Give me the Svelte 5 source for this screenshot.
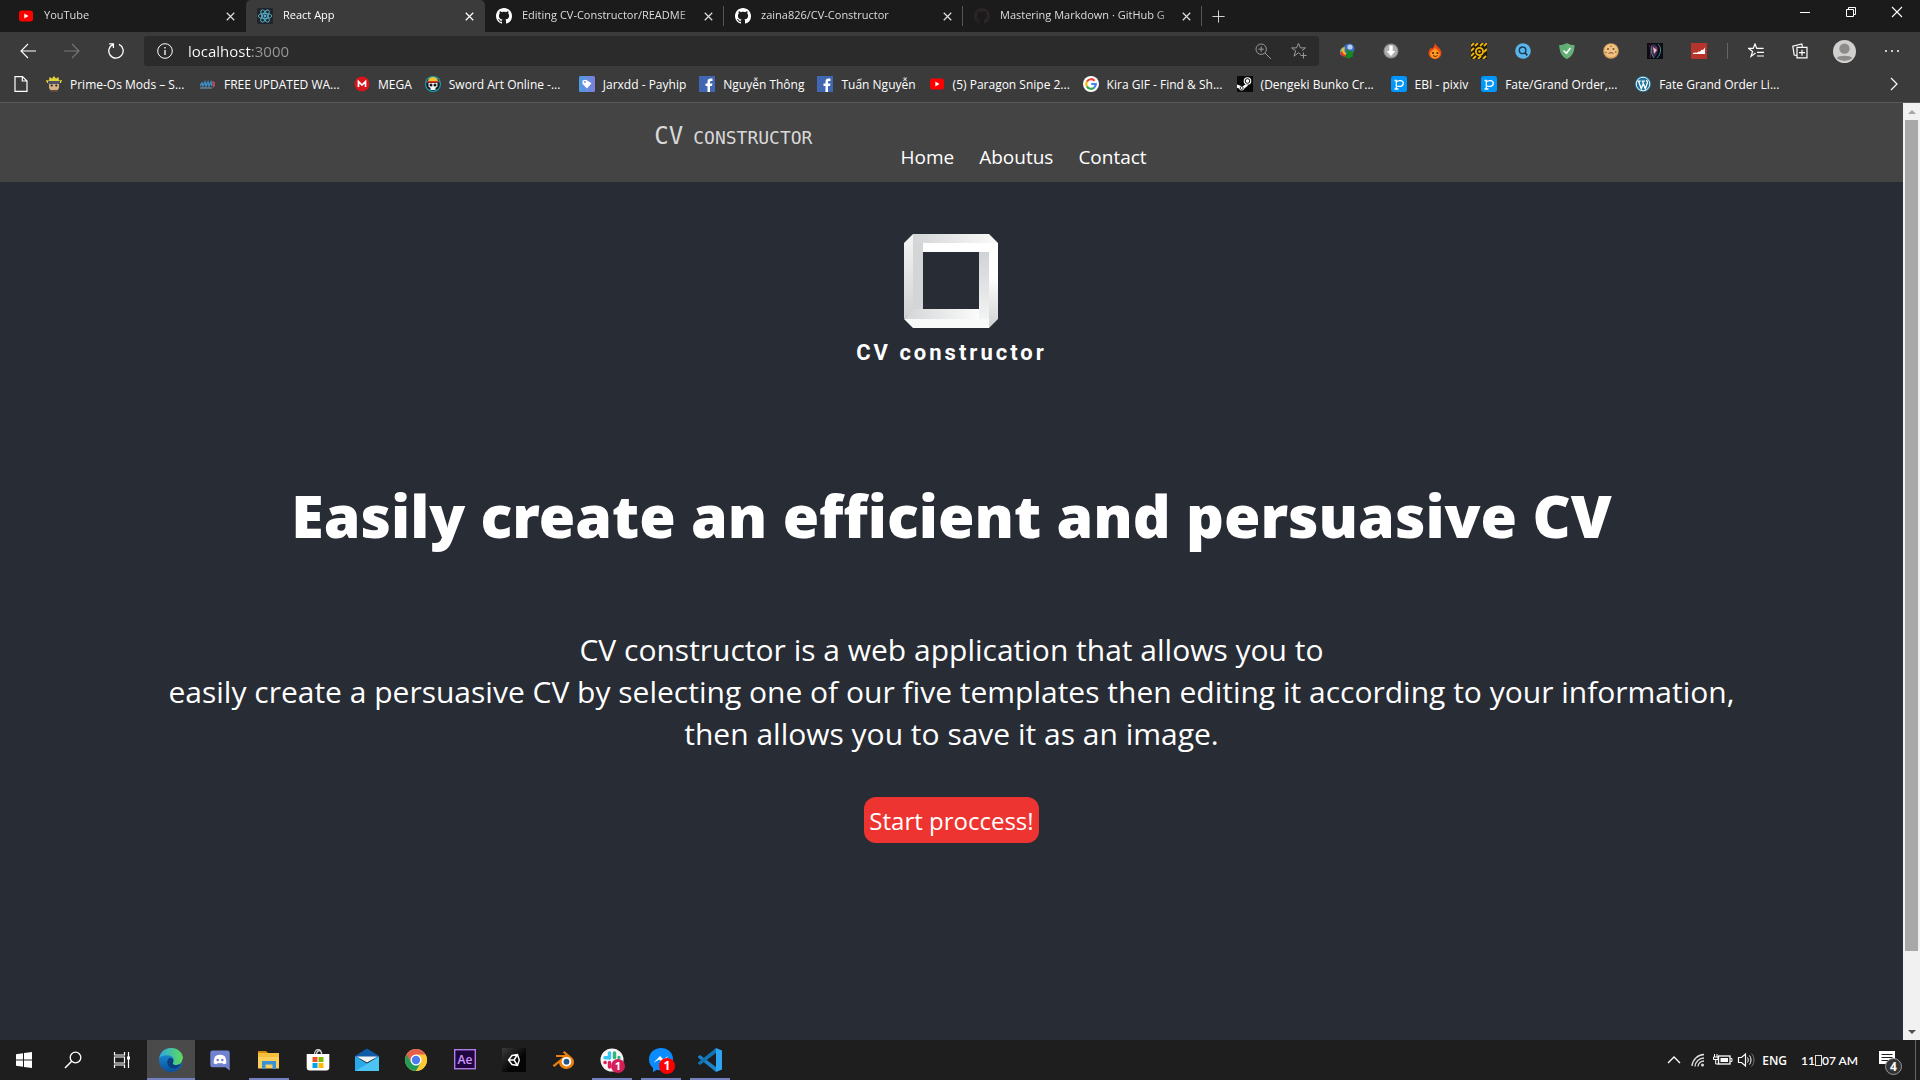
<script>
  const github =
    '<path fill="COLOR" d="M8 0C3.58 0 0 3.58 0 8c0 3.54 2.29 6.53 5.47 7.59.4.07.55-.17.55-.38 0-.19-.01-.82-.01-1.49-2.01.37-2.53-.49-2.69-.94-.09-.23-.48-.94-.82-1.13-.28-.15-.68-.52-.01-.53.63-.01 1.08.58 1.23.82.72 1.21 1.87.87 2.33.66.07-.52.28-.87.51-1.07-1.78-.2-3.64-.89-3.64-3.95 0-.87.31-1.59.82-2.15-.08-.2-.36-1.02.08-2.12 0 0 .67-.21 2.2.82.64-.18 1.32-.27 2-.27s1.36.09 2 .27c1.53-1.04 2.2-.82 2.2-.82.44 1.1.16 1.92.08 2.12.51.56.82 1.27.82 2.15 0 3.07-1.87 3.75-3.65 3.95.29.25.54.73.54 1.48 0 1.07-.01 1.93-.01 2.2 0 .21.15.46.55.38A8.01 8.01 0 0016 8c0-4.42-3.58-8-8-8z"/>';

  // 16-unit icons used in the tab strip, toolbar and bookmarks bar
  const small = {
    youtube: '<rect x="1" y="2.5" width="14" height="11" rx="2.5" fill="#f00"/><path d="M6.3 5.5v5l4.2-2.5z" fill="#fff"/>',
    react: '<rect width="16" height="16" rx="1.5" fill="#20242b"/><g fill="none" stroke="#5ab4cc" stroke-width=".9"><ellipse cx="8" cy="8" rx="6.8" ry="2.6"/><ellipse cx="8" cy="8" rx="6.8" ry="2.6" transform="rotate(60 8 8)"/><ellipse cx="8" cy="8" rx="6.8" ry="2.6" transform="rotate(120 8 8)"/></g><circle cx="8" cy="8" r="1.4" fill="#5ab4cc"/>',
    github: github.replace('COLOR', '#fff'),
    githubDark: github.replace('COLOR', '#2c2425'),
    close: '<path d="M4 4l8 8M12 4l-8 8" stroke="currentColor" stroke-width="1.3" fill="none"/>',
    plus: '<path d="M8 1.5v13M1.5 8h13" stroke="currentColor" fill="none"/>',
    back: '<path d="M16 8H1M8 1L1 8l7 7" stroke="currentColor" stroke-width="1.1" fill="none"/>',
    forward: '<path d="M0 8h15M8 1l7 7-7 7" stroke="currentColor" stroke-width="1.1" fill="none"/>',
    reload: '<path d="M5.2 1.3A7.2 7.2 0 1 0 11 1.4M1.2.8h4.2V5" stroke="currentColor" stroke-width="1.3" fill="none"/>',
    info: '<circle cx="8" cy="8" r="7.3" stroke="currentColor" fill="none"/><path d="M8 7v5M8 4v1.4" stroke="currentColor" stroke-width="1.3"/>',
    zoom: '<circle cx="6.2" cy="6.2" r="5.2" stroke="currentColor" fill="none"/><path d="M10 10l6 6M6.2 3.5v5.4M3.5 6.2h5.4" stroke="currentColor" fill="none"/>',
    star: '<path d="M9.8 11.4L7.5 9.8 3 13.2l1.7-5.3L.6 4.9h4.9L7.5.4l2 4.5h5L11 7.7M12.5 9.5v6M9.5 12.5h6" stroke="currentColor" fill="none"/>',
    favs: '<path d="M7.5 10L3 13.4l1.6-5L.6 5.4h4.6L7 1l1.8 4.4h6.8M9 9.3h7M9 13h7" stroke="currentColor" stroke-width="1.2" fill="none"/>',
    collections: '<path d="M4.5 12.3L2.2 12 .8 3.2 9.8 1l.6 2.6M5 4.4h10v10.4H5zM10 6.7v6M7 9.7h6" stroke="currentColor" stroke-width="1.2" fill="none"/>',
    page: '<path d="M2 .6h7.5L14 5v10.4H2zM9.3.6V5H14" stroke="currentColor" stroke-width="1.2" fill="none"/>',
    chevron: '<path d="M5 2l6 6-6 6" stroke="currentColor" stroke-width="1.2" fill="none"/>',
    dots: '<g fill="currentColor"><circle cx="2" cy="8" r="1"/><circle cx="8" cy="8" r="1"/><circle cx="14" cy="8" r="1"/></g>',
    minimize: '<path d="M3 8.5h10" stroke="currentColor"/>',
    restore: '<path d="M3.5 5.5h7v7h-7zM5.500 5.500v-2h7v7h-2" stroke="currentColor" fill="none"/>',
    shut: '<path d="M3 3l10 10M13 3L3 13" stroke="currentColor" stroke-width="1.1"/>',
    avatar: '<circle cx="8" cy="8" r="8" fill="#d2d0ce"/><circle cx="8" cy="6" r="3.6" fill="#8d8a87"/><path d="M2.600 12.500c1.500-2 9.300-2 10.800 0A7.800 7.800 0 0 1 2.600 12.500z" fill="#8d8a87"/>',
    idm: '<circle cx="10" cy="6" r="5.500" fill="#3a6cc4"/><circle cx="11" cy="4" r="2.600" fill="#b5cdf0"/><path d="M5 4C2 5 .5 8 2 11l4 2.500 1.500-3C5.500 9.500 5 7 6 4.500z" fill="#e8c21c"/><path d="M4 4.500C1 6.500.5 9 1.500 11.500l1.500 1C2 9.500 2.500 7 4.500 5z" fill="#6fb6e0"/><path d="M1 9c.6 3 3 5 6 5.500l1-2C5.500 12.200 3.500 10.500 3 8z" fill="#d8382c"/><path d="M6.500 6.500L15.500 9l-2 1.500.5 3-4.500 2-4-2 3.500-2.500z" fill="#128a1e"/>',
    download: '<circle cx="8" cy="8" r="7.500" fill="#8e8e8e"/><circle cx="8" cy="8" r="6.200" fill="#b0b0b0"/><path d="M6.300 2.500h3.400v5.500h2.600L8 13 3.700 8h2.600z" fill="#fff"/>',
    flame: '<path d="M8 0c.6 3 6.500 5 6.500 10.200A6.200 6.200 0 0 1 8 16a6.200 6.200 0 0 1-6.500-5.800C1.500 7.600 3 6 4 4.500l1 1.600C6.500 4.500 7.700 2.600 8 0z" fill="#ee4a12"/><path d="M8 5c2 2 4.800 3 4.800 6A4.600 4.600 0 0 1 8 15.500 4.600 4.600 0 0 1 3.200 11C3.200 8.500 6 7.500 8 5z" fill="#ff9a1c"/><circle cx="6" cy="10" r="1" fill="#4c1a05"/><circle cx="10.500" cy="10" r="1" fill="#4c1a05"/><path d="M6 12.500c1.500 1.200 3 1.200 4.500 0" stroke="#4c1a05" fill="none"/>',
    reel: '<rect width="16" height="16" fill="#201a08"/><path d="M0 3l3-3M4 3l3-3M9 3l3-3M13 3l3-3M0 8l3-3M13 9l3-3M0 13l3-3M2 16l3-3M7 16l3-3M12 16l3-3" stroke="#f2b70d" stroke-width="1.800"/><circle cx="8.500" cy="8.500" r="3.600" fill="none" stroke="#f2b70d" stroke-width="1.800"/><circle cx="8.500" cy="8.500" r="1.200" fill="#f2b70d"/>',
    search: '<circle cx="8" cy="8" r="7.800" fill="#5ab5ea"/><circle cx="7.600" cy="7.300" r="3.300" fill="none" stroke="#1c3c55" stroke-width="1.400"/><path d="M10 9.700l2.300 2.600" stroke="#1c3c55" stroke-width="1.800"/>',
    shield: '<path d="M8 .2c2.600 1.400 5 1.700 7.500 1.800 0 6-1.500 11-7.500 14C2 13 .5 8 .5 2 3 1.900 5.400 1.600 8 .2z" fill="#67b279"/><path d="M8 .2C5.400 1.600 3 1.900.5 2c0 6 1.500 11 7.500 14z" fill="#5fae72"/><path d="M4.500 7.500L7.400 10.300l4-5.300" stroke="#fff" stroke-width="1.500" fill="none"/>',
    cookie: '<circle cx="8" cy="8" r="7.800" fill="#d9a05b"/><circle cx="8" cy="7.500" r="6.600" fill="#efc183"/><g fill="#7a4b20"><circle cx="5" cy="6" r="1"/><circle cx="10.500" cy="6" r="1"/><circle cx="8" cy="3.200" r=".7"/><circle cx="12.700" cy="9" r=".7"/><circle cx="3" cy="9.500" r=".7"/></g><path d="M5.500 10.500c1.500-1 3.500-1 5 0" stroke="#7a4b20" fill="none"/>',
    portrait: '<rect width="16" height="16" fill="#0b0b14"/><path d="M2 2c2 3 2 8 1 13" stroke="#6b2438" fill="none"/><path d="M4 2c3-2 6 0 7 4 0 4-2 7-4 9-3-3-4-9-3-13z" fill="#3c2a50"/><path d="M6 4l4 3-3 4z" fill="#eabfc8"/><path d="M11 1c4 4 3 10-1 14M5 3c-1 4-1 8 2 12" stroke="#4a8d96" fill="none"/><circle cx="9" cy="5" r="1" fill="#b92c3e"/>',
    graph: '<rect width="16" height="16" fill="#b5352c"/><path d="M2 10l2-.5 2 .3 1.500-1.300 1.500.3 1.500-2 1.500.2L14 4.500V11H2z" fill="#fff"/>',
    naruto: '<path d="M1 7L0 4l3 .5L3.500 1 6 2.500 8 0l2 2.500L12.500 1l.5 3.500 3-.5-1 3z" fill="#e2d33a"/><rect x="2" y="5" width="12" height="3" fill="#4d5361"/><path d="M3 8h10v4l-2 3H5l-2-3z" fill="#d7b184"/><circle cx="5.700" cy="9.500" r="1.100" fill="#222"/><circle cx="10.300" cy="9.500" r="1.100" fill="#222"/><path d="M4 14h8v2H4z" fill="#5e4a39"/>',
    wave: '<path d="M0 10l2-3 1 3 2-4 1 4 2-4 1 4 2-4 1 4" stroke="#3b8ac0" stroke-width="1.600" fill="none"/><path d="M12 5l3 1v4l-2 2z" fill="#b44b54"/><path d="M0 12h12" stroke="#7aa2bd"/>',
    mega: '<circle cx="8" cy="8" r="7.500" fill="#d9141b"/><path d="M4.500 11V5.500L8 9l3.500-3.500V11" stroke="#fff" stroke-width="1.700" fill="none"/>',
    skull: '<circle cx="8" cy="8" r="8" fill="#16a3b8"/><circle cx="8" cy="8" r="6.800" fill="#14161a"/><path d="M3 5.500a5 4.500 0 0 1 10 0z" fill="#f1c232"/><path d="M2 5h12v1.600H2z" fill="#d23a2a"/><path d="M3.500 7h9v3.500l-2 1.500v2h-5v-2l-2-1.500z" fill="#f4f4f4"/><circle cx="6" cy="9" r="1.500" fill="#14161a"/><circle cx="10" cy="9" r="1.500" fill="#14161a"/>',
    payhip: '<defs><linearGradient id="ph" x1="0" x2="1"><stop offset="0" stop-color="#4e9be4"/><stop offset="1" stop-color="#7d7fdc"/></linearGradient></defs><rect width="16" height="16" rx="1.500" fill="url(#ph)"/><path d="M3.500 4.500l3.500-.8 5.500 3.500L8 12.500 3.500 8z" fill="#fff"/><circle cx="6" cy="6" r=".9" fill="#5e8ce0"/>',
    facebook: '<rect width="16" height="16" fill="#4267b2"/><path d="M11 16V10h2l.4-2.400H11V6.200c0-.8.300-1.200 1.300-1.200h1.200V2.800C13 2.700 12.300 2.600 11.600 2.600 9.600 2.600 8.500 3.800 8.500 5.800v1.800h-2V10h2v6z" fill="#fff"/>',
    google: '<circle cx="8" cy="8" r="8" fill="#fff"/><g fill="none" stroke-width="2.200"><path d="M11.600 4.800A4.800 4.800 0 0 0 3.900 5.600" stroke="#ea4335"/><path d="M3.900 5.600a4.900 4.900 0 0 0 0 4.800" stroke="#fbbc05"/><path d="M3.900 10.400a4.800 4.800 0 0 0 7.300 1.200" stroke="#34a853"/><path d="M11.200 11.600A4.800 4.800 0 0 0 12.800 8H8.200" stroke="#4285f4"/></g>',
    steam: '<rect width="16" height="16" fill="#0a0a0a"/><circle cx="10.500" cy="5" r="3.800" fill="#fff"/><circle cx="10.500" cy="5" r="2.300" fill="none" stroke="#0a0a0a"/><path d="M0 8.500l5.500 2L9 8l2 1.500-3.600 3A2.800 2.800 0 0 1 2 12.600l-2-.9z" fill="#fff"/><circle cx="4.700" cy="12" r="1.500" fill="none" stroke="#0a0a0a" stroke-width=".8"/>',
    pixiv: '<rect width="16" height="16" rx="2.500" fill="#0096fa"/><path d="M3.500 4.500H5.300V13M5.500 6c1-1.800 6.800-2.500 6.800 1.300 0 3.700-5 3.500-6.800 2.500M3.500 13h4" stroke="#fff" stroke-width="1.300" fill="none"/>',
    wordpress: '<circle cx="8" cy="8" r="8" fill="#21759b"/><circle cx="8" cy="8" r="6.800" fill="none" stroke="#fff" stroke-width=".9"/><path d="M2.500 5.200h3.200M3.600 5.200l2.700 7.600L8 8M6.700 5.200h3.200M7.500 5.200l2.800 7.600 2.200-6.400c-.2-1-1-1.600-1-2.400" stroke="#fff" stroke-width="1.300" fill="none"/>',
  };

  // 24-unit icons used in the taskbar
  const large = {
    windows: '<path d="M4 6.200l7-1v6.300H4zM12 5.100l8-1.100v7.500h-8zM4 12.500h7v6.300l-7-1zM12 12.500h8V20l-8-1.100z" fill="#fff"/>',
    find: '<circle cx="14.500" cy="9.500" r="5.300" stroke="#fff" stroke-width="1.300" fill="none"/><path d="M10.700 13.300L4 20" stroke="#fff" stroke-width="1.500"/>',
    tasks: '<path d="M4.500 4v3h10V4M4.500 20v-3h10v3M4.500 9h10v6h-10zM18.500 4v16" stroke="#fff" stroke-width="1.200" fill="none"/><rect x="17" y="8.500" width="3" height="3" fill="#fff"/>',
    edge: '<defs><linearGradient id="eg" x1="0" x2="1"><stop offset="0" stop-color="#2da9e0"/><stop offset="1" stop-color="#5fdc5a"/></linearGradient><linearGradient id="eb" x1="0" y1="0" x2="0" y2="1"><stop offset="0" stop-color="#1f9de0"/><stop offset="1" stop-color="#0b4f9c"/></linearGradient></defs><circle cx="12" cy="12" r="12" fill="url(#eb)"/><path d="M.3 10C1.500 3.500 6.500 0 12 0c7 0 12 5 12 10.500 0 4-3 6.500-6.500 6.500-3 0-4.500-1.200-3.500-2.600 1.600-2.200.6-6-3.500-6.900C6.500 6.600 2 7.500.3 10z" fill="url(#eg)"/><path d="M14 14.400c-1 1.400.5 2.600 3.500 2.600 2 0 3.700-.7 5-2-1.500 4.500-7 6.500-10.500 5-4.500-2-5-7.500-1.500-10 3.500-.3 4.600 2.600 3.500 4.400z" fill="#0c3f80"/><path d="M14 14.400c-1 1.400.5 2.600 3.500 2.600 2 0 3.700-.7 5-2l2-1V11l-1-.5c0 4-3 6.500-6 6.500-3 0-4.500-1.200-3.500-2.600z" fill="#4a4a4a"/>',
    discord: '<path d="M4.500 2.500h15a2.200 2.200 0 0 1 2.200 2.200V22.500l-4.200-3.300h-13a2.200 2.200 0 0 1-2.200-2.200V4.700a2.200 2.200 0 0 1 2.200-2.200z" fill="#7183d0"/><path d="M7.500 8c3-1.600 6-1.600 9 0 1.500 2.500 2 5 1.800 7.200-1.300 1-2.500 1.200-3.200.9l-.7-1.100c-1.600.4-3.200.4-4.800 0l-.7 1.100c-.7.300-1.900.1-3.200-.9C5.500 13 6 10.500 7.500 8z" fill="#fff"/><circle cx="9.700" cy="12" r="1.300" fill="#7183d0"/><circle cx="14.300" cy="12" r="1.300" fill="#7183d0"/>',
    folder: '<path d="M1 3h8l2 2H1z" fill="#d68a0c"/><path d="M1 5h21v15.500H1z" fill="#fbcf5a"/><path d="M1 5h21v4H1z" fill="#f6bf3e"/><path d="M5 21V13h14v8h-3.500v-4.500h-7V21z" fill="#3a92d6"/>',
    store: '<path d="M8.500 6.500C8.500 0 15.500 0 15.500 6.500M10.500 6.500c0-4 4-5.500 5.500-1" stroke="#ddd" stroke-width="1.200" fill="none"/><path d="M.7 6h22.600v13.500a3 3 0 0 1-3 3H3.700a3 3 0 0 1-3-3z" fill="#fff"/><path d="M6.500 9h5v5h-5z" fill="#f25022"/><path d="M12.500 9h5v5h-5z" fill="#7fba00"/><path d="M6.500 15h5v5h-5z" fill="#00a4ef"/><path d="M12.500 15h5v5h-5z" fill="#ffb900"/>',
    mail: '<path d="M0 8l12-7.500L24 8v3H0z" fill="#0f5ba8"/><path d="M0 8l12 7.500L24 8v15H0z" fill="#2aa9ea"/><path d="M0 23L24 9v14z" fill="#4cc5f5"/><path d="M1.500 8.500h21L12 14.500z" fill="#f2f2f2"/>',
    chrome: '<circle cx="12" cy="12" r="11" fill="#fcc934"/><path d="M2.500 6.500A11 11 0 0 0 12 23l5-8-5-3z" fill="#1f9d57"/><path d="M21.500 6.500H12l4.800 8.300L12 23A11 11 0 0 0 21.500 6.500z" fill="#fcc934"/><path d="M2.500 6.500A11 11 0 0 1 21.500 6.500H12L7 14.500z" fill="#e3604f"/><circle cx="12" cy="12" r="5.500" fill="#fff"/><circle cx="12" cy="12" r="4.200" fill="#4a7cf0"/>',
    ae: '<rect x="1.700" y="1.700" width="20.600" height="19" fill="#1f0640" stroke="#b07ce6" stroke-width="1.400"/><text x="12" y="16" text-anchor="middle" font-family="Open Sans, sans-serif" font-weight="600" font-size="12" fill="#cf96ff">Ae</text>',
    unity: '<defs><linearGradient id="un" x1="0" x2="1" y1="0" y2="1"><stop offset="0" stop-color="#3b3b3b"/><stop offset=".6" stop-color="#050505"/></linearGradient></defs><rect width="24" height="24" fill="url(#un)"/><g stroke="#fff" stroke-width="1.400" fill="none"><path d="M6.500 12l3.500-4.500 5.500-1 1.800 5.500-1.800 5.500-5.500-1zM6.500 12h5.500M12 12l3.500-5.500M12 12l3.500 5.500"/></g>',
    blender: '<path d="M1.500 17.500L12 9H5V7h9.500l-2.700-2.500L13.500 3l8 7c4 5-.5 11-6 11-4 0-7-2.500-7.500-6l-4.500 4z" fill="#ea7f10"/><circle cx="15.500" cy="13.700" r="4.800" fill="#fff"/><circle cx="15.500" cy="13.700" r="2.900" fill="#265787"/>',
    slack: '<circle cx="12" cy="12" r="11.500" fill="#f6f6f6"/><g stroke-width="3.400" stroke-linecap="round"><path d="M9.500 5v5" stroke="#36c5f0"/><path d="M5 9.700h4" stroke="#36c5f0"/><path d="M14.500 5v4.500M19 9.500h-.1" stroke="#2eb67d"/><path d="M5 14.500h.2M9.500 14.500V19" stroke="#e01e5a"/><path d="M14.500 14.500H19M14.500 19v-.2" stroke="#ecb22e"/></g>',
    messenger: '<path d="M12 0C5 0 0 5 0 11.500 0 15 1.500 18 4 20v4l4-2.200c1.200.4 2.600.5 4 .5 7 0 12-5 12-11.200S19 0 12 0z" fill="#0a8cff"/><path d="M4.500 14.800L11 8l3.200 3.200L19.500 8 13.500 14.800 10.200 11.600z" fill="#fff"/>',
    vscode: '<path d="M0 8.500L2 7l16 12v5L0 9.500z" fill="#1b82cb"/><path d="M0 15.500L2 17 18 5V0L0 14.500z" fill="#1273b5"/><path d="M18 0l6 2.500v19L18 24z" fill="#2ea5f2"/>',
    up: '<path d="M6 15l6-6 6 6" stroke="#fff" stroke-width="1.300" fill="none"/>',
    wifi: '<g stroke="#ddd" stroke-width="1.300" fill="none"><path d="M6 18A12.500 12.500 0 0 1 18 6.500M9 18.500A9 9 0 0 1 18 10M12 18.500A6 6 0 0 1 18 13"/></g><circle cx="16.500" cy="17" r="1.500" fill="#ddd"/>',
    battery: '<rect x="8.500" y="8" width="11.500" height="8" stroke="#fff" stroke-width="1.300" fill="none"/><rect x="10.500" y="10" width="7.500" height="4" fill="#fff"/><path d="M20.500 10.500h1.500v3h-1.500M4.500 6v3M7 6v3M3.500 9h4.500v2.500H3.500zM5.700 12v4h3" stroke="#fff" fill="none"/>',
    sound: '<path d="M4.500 9.500h3l4-3.500v12l-4-3.500h-3z" stroke="#fff" stroke-width="1.200" fill="none"/><path d="M13.500 9.500c1 1.500 1 3.500 0 5M15.500 7.500c2 2.500 2 6.500 0 9" stroke="#fff" fill="none"/><path d="M17.500 5.500c3.300 3.500 3.300 9.500 0 13" stroke="#777" fill="none"/>',
    note: '<path d="M4 3h16v13h-5l-4 4v-4H4z" fill="#fff"/><path d="M6.500 6.500h11M6.500 9.500h11M6.500 12.500h7" stroke="#1e1e1e"/>',
  };

  const tabs = [
    { icon: 'youtube', title: 'YouTube' },
    { icon: 'react', title: 'React App', active: true },
    { icon: 'github', title: 'Editing CV-Constructor/README' },
    { icon: 'github', title: 'zaina826/CV-Constructor' },
    { icon: 'githubDark', title: 'Mastering Markdown · GitHub G' },
  ];

  const extensions = [
    ['idm', 'Download manager'],
    ['download', 'Downloader'],
    ['flame', 'Hot deals'],
    ['reel', 'Video tools'],
    ['search', 'Search'],
    ['shield', 'Ad blocker'],
    ['cookie', 'Cookies'],
    ['portrait', 'Theme'],
    ['graph', 'Statistics'],
  ];

  const bookmarks = [
    { icon: 'naruto', text: 'Prime-Os Mods – S...', wide: true },
    { icon: 'wave', text: 'FREE UPDATED WA...', wide: true },
    { icon: 'mega', text: 'MEGA' },
    { icon: 'skull', text: 'Sword Art Online -...', wide: true },
    { icon: 'payhip', text: 'Jarxdd - Payhip' },
    { icon: 'facebook', text: 'Nguyễn Thông' },
    { icon: 'facebook', text: 'Tuấn Nguyễn' },
    { icon: 'youtube', text: '(5) Paragon Snipe 2...', wide: true },
    { icon: 'google', text: 'Kira GIF - Find & Sh...', wide: true },
    { icon: 'steam', text: '(Dengeki Bunko Cr...', wide: true },
    { icon: 'pixiv', text: 'EBI - pixiv' },
    { icon: 'pixiv', text: 'Fate/Grand Order,...', wide: true },
    { icon: 'wordpress', text: 'Fate Grand Order Li...', wide: true },
  ];

  const apps = [
    { icon: 'windows', label: 'Start' },
    { icon: 'find', label: 'Search' },
    { icon: 'tasks', label: 'Task view' },
    { icon: 'edge', label: 'Edge', current: true },
    { icon: 'discord', label: 'Discord' },
    { icon: 'folder', label: 'File Explorer', open: true },
    { icon: 'store', label: 'Store' },
    { icon: 'mail', label: 'Mail' },
    { icon: 'chrome', label: 'Chrome' },
    { icon: 'ae', label: 'After Effects' },
    { icon: 'unity', label: 'Unity' },
    { icon: 'blender', label: 'Blender' },
    { icon: 'slack', label: 'Slack', open: true, badge: '1', tone: 'pink' },
    { icon: 'messenger', label: 'Messenger', open: true, badge: '1', tone: 'red' },
    { icon: 'vscode', label: 'Visual Studio Code', open: true },
  ];

  let address = $state('localhost:3000');
</script>

{#snippet s(name)}
  <svg class="s" viewBox="0 0 16 16" aria-hidden="true">{@html small[name]}</svg>
{/snippet}

{#snippet l(name)}
  <svg class="l" viewBox="0 0 24 24" aria-hidden="true">{@html large[name]}</svg>
{/snippet}

<div class="screen">
  <header class="browser">
    <div class="tabstrip">
      {#each tabs as tab}
        <div class="tab" class:active={tab.active}>
          <button class="tab-title">{@render s(tab.icon)}<span>{tab.title}</span></button>
          <button class="tab-close" aria-label="Close {tab.title}">{@render s('close')}</button>
        </div>
      {/each}
      <button class="new-tab" aria-label="New tab">{@render s('plus')}</button>
      <div class="window">
        <button aria-label="Minimize">{@render s('minimize')}</button>
        <button aria-label="Restore">{@render s('restore')}</button>
        <button aria-label="Close">{@render s('shut')}</button>
      </div>
    </div>

    <div class="toolbar">
      <button class="tool" aria-label="Back">{@render s('back')}</button>
      <button class="tool dim" aria-label="Forward">{@render s('forward')}</button>
      <button class="tool" aria-label="Reload">{@render s('reload')}</button>
      <div class="address">
        <button class="info" aria-label="Site information">{@render s('info')}</button>
        <input type="text" aria-label="Address" bind:value={address} />
        <button class="grey" aria-label="Zoom">{@render s('zoom')}</button>
        <button class="grey" aria-label="Add to favorites">{@render s('star')}</button>
      </div>
      <div class="extensions">
        {#each extensions as [icon, label]}
          <button class="tool" aria-label={label}>{@render s(icon)}</button>
        {/each}
      </div>
      <span class="rule"></span>
      <div class="extensions">
        <button class="tool" aria-label="Favorites">{@render s('favs')}</button>
        <button class="tool" aria-label="Collections">{@render s('collections')}</button>
        <button class="tool avatar" aria-label="Profile">{@render s('avatar')}</button>
        <button class="tool" aria-label="Settings">{@render s('dots')}</button>
      </div>
    </div>

    <nav class="bookmarks" aria-label="Bookmarks">
      <button class="page" aria-label="Page">{@render s('page')}</button>
      {#each bookmarks as b}
        <a href="#bookmark" class:wide={b.wide}>{@render s(b.icon)}<span>{b.text}</span></a>
      {/each}
      <button class="more" aria-label="More bookmarks">{@render s('chevron')}</button>
    </nav>
  </header>

  <div class="viewport">
    <div class="site">
      <nav class="sitenav" aria-label="Site">
        <a class="wordmark" href="#top"><span class="big">CV</span><span>CONSTRUCTOR</span></a>
        <div class="links">
          <a href="#home">Home</a>
          <a href="#about">Aboutus</a>
          <a href="#contact">Contact</a>
        </div>
      </nav>
      <main>
        <div class="logo">
          <svg viewBox="0 0 94 94" aria-hidden="true">
            <defs>
              <linearGradient id="lt" x1="0" x2="1"><stop offset="0" stop-color="#d3d5d6" /><stop offset="1" stop-color="#fbfbfb" /></linearGradient>
              <linearGradient id="ll" x1="0" y1="0" x2="0" y2="1"><stop offset="0" stop-color="#f5f5f5" /><stop offset="1" stop-color="#d0d1d2" /></linearGradient>
              <linearGradient id="lr" x1="0" y1="0" x2="0" y2="1"><stop offset="0" stop-color="#d0d2d4" /><stop offset="1" stop-color="#f8f8f8" /></linearGradient>
              <linearGradient id="lo" x1="0" y1="0" x2="0" y2="1"><stop offset=".4" stop-color="#fff" /><stop offset="1" stop-color="#d0d1d2" /></linearGradient>
            </defs>
            <path d="M9 0h10v76H9z" fill="#d3d5d7" />
            <path d="M9 0h76l9 9H9z" fill="url(#lt)" />
            <path d="M0 9l9-9v76L0 85z" fill="url(#ll)" />
            <path d="M19 9h75v9H19z" fill="#fff" />
            <path d="M85 9h9v76l-9 9z" fill="url(#lo)" />
            <path d="M75 18h10v76L75 85z" fill="url(#lr)" />
            <path d="M9 75h66v10H0z" fill="url(#lt)" />
            <path d="M0 85h85v9H9z" fill="#f8f9f9" />
          </svg>
          <span>CV constructor</span>
        </div>
        <h1>Easily create an efficient and persuasive CV</h1>
        <p>
          CV constructor is a web application that allows you to<br />
          easily create a persuasive CV by selecting one of our five templates then editing it according to your information,<br />
          then allows you to save it as an image.
        </p>
        <button class="start">Start proccess!</button>
      </main>
    </div>
    <div class="scrollbar" aria-hidden="true">
      <span class="arrow up"></span>
      <span class="track"><span class="thumb"></span></span>
      <span class="arrow down"></span>
    </div>
  </div>

  <footer class="taskbar">
    {#each apps as app}
      <button class="app" class:current={app.current} class:open={app.open} aria-label={app.label}>
        {@render l(app.icon)}
        {#if app.badge}<span class="badge {app.tone}">{app.badge}</span>{/if}
      </button>
    {/each}
    <div class="tray">
      <button aria-label="Show hidden icons">{@render l('up')}</button>
      <button aria-label="Network">{@render l('wifi')}</button>
      <button aria-label="Battery">{@render l('battery')}</button>
      <button aria-label="Volume">{@render l('sound')}</button>
      <span class="lang">ENG</span>
      <time>11<i></i>07 AM</time>
      <button class="notes" aria-label="Notifications">{@render l('note')}<span class="count">4</span></button>
    </div>
  </footer>
</div>

<style>
  :global(body) {
    margin: 0;
    background: #282c34;
  }
  .screen {
    display: flex;
    flex-direction: column;
    min-height: 100vh;
    font-family: 'Open Sans', 'Noto Sans', sans-serif;
    color: #fff;
  }
  button {
    padding: 0;
    border: 0;
    background: none;
    color: inherit;
    font: inherit;
    display: flex;
    align-items: center;
    justify-content: center;
  }
  a {
    color: inherit;
    text-decoration: none;
  }
  .s {
    width: 16px;
    height: 16px;
    flex: none;
  }
  .l {
    width: 24px;
    height: 24px;
    flex: none;
  }

  .browser {
    background: #3b3b3b;
    border-bottom: 1px solid #5a5a5a;
    font-size: 12px;
  }
  .tabstrip {
    display: flex;
    height: 32px;
    padding-left: 7px;
    background: #1b1b1b;
    color: #ddd;
    font-size: 11px;
  }
  .tab {
    display: flex;
    align-items: center;
    box-sizing: border-box;
    width: 239px;
    min-width: 0;
    padding: 0 8px 0 11px;
  }
  .tab.active {
    background: #3b3b3b;
    border-radius: 5px 5px 0 0;
    color: #fff;
  }
  .tab:nth-child(n + 3) {
    background: linear-gradient(#555, #555) right center / 1px 20px no-repeat;
  }
  .tab-title {
    flex: 1;
    min-width: 0;
    gap: 10px;
    justify-content: flex-start;
  }
  .tab-title span {
    flex: 1;
    overflow: hidden;
    white-space: nowrap;
    text-align: left;
    line-height: 16px;
    padding-bottom: 2px;
    mask-image: linear-gradient(to right, #000 calc(100% - 24px), transparent);
  }
  .tab-close .s {
    width: 15px;
    height: 15px;
  }
  .new-tab {
    width: 32px;
  }
  .new-tab .s {
    width: 15px;
    height: 15px;
  }
  .window {
    display: flex;
    margin-left: auto;
    height: 24px;
    color: #fff;
  }
  .window button {
    width: 46px;
  }

  .toolbar {
    display: flex;
    align-items: center;
    height: 38px;
    padding: 0 6px;
  }
  .tool {
    width: 44px;
    height: 30px;
  }
  .dim {
    color: #777;
  }
  .address {
    display: flex;
    align-items: center;
    flex: 1;
    height: 30px;
    margin: 0 6px;
    padding: 0 2px 0 13px;
    border-radius: 3px;
    background: #2b2b2b;
  }
  .address input {
    flex: 1;
    min-width: 0;
    margin-left: 15px;
    padding: 0;
    border: 0;
    outline: 0;
    background: linear-gradient(to right, #fff 64px, #999 64px);
    background-clip: text;
    color: transparent;
    font: inherit;
    font-size: 15px;
  }
  .grey {
    width: 36px;
    color: #999;
  }
  .extensions {
    display: flex;
  }
  .rule {
    width: 1px;
    height: 16px;
    margin: 0 6px;
    background: #666;
  }
  .avatar {
    margin-right: 4px;
  }
  .avatar .s {
    width: 23px;
    height: 23px;
  }

  .bookmarks {
    display: flex;
    align-items: center;
    height: 28px;
    padding: 0 18px 4px 13px;
    white-space: nowrap;
  }
  .page {
    margin-right: 17px;
  }
  .bookmarks a {
    display: flex;
    align-items: center;
    gap: 8px;
    padding-right: 13px;
  }
  .bookmarks a.wide {
    box-sizing: border-box;
    width: 154px;
    padding-right: 0;
  }
  .more {
    margin-left: auto;
  }

  .viewport {
    display: flex;
    flex: 1;
  }
  .site {
    flex: 1;
    min-width: 0;
    background: #282c34;
  }
  .sitenav {
    display: flex;
    justify-content: center;
    gap: 88px;
    height: 79px;
    padding-right: 102px;
    box-sizing: border-box;
    background: #444;
  }
  .wordmark {
    display: flex;
    align-items: baseline;
    gap: 10px;
    padding-top: 15px;
    color: #d8d8d8;
    font-family: 'DejaVu Sans Mono', monospace;
    font-size: 18px;
    line-height: 36px;
  }
  .big {
    font-size: 24px;
  }
  .links {
    display: flex;
    gap: 25px;
    padding-top: 40px;
    font-size: 19px;
    line-height: 28px;
  }
  main {
    display: flex;
    flex-direction: column;
    align-items: center;
    padding: 52px 16px 0;
    text-align: center;
  }
  .logo {
    display: flex;
    flex-direction: column;
    align-items: center;
    gap: 10px;
    font-family: Roboto, sans-serif;
    font-size: 22px;
    font-weight: 700;
    line-height: 30px;
    letter-spacing: 3px;
  }
  .logo svg {
    width: 94px;
    height: 94px;
  }
  h1 {
    margin: 107px 0 0;
    font-family: 'Noto Sans', 'Open Sans', sans-serif;
    font-size: 59px;
    font-weight: 900;
    line-height: 80px;
  }
  p {
    margin: 74px 0 0;
    font-size: 30px;
    line-height: 42px;
  }
  .start {
    height: 46px;
    margin-top: 42px;
    padding: 0 5px;
    border-radius: 12px;
    background: #ee3431;
    font-size: 24px;
  }

  .scrollbar {
    display: flex;
    flex-direction: column;
    width: 17px;
    background: #f1f1f1;
  }
  .arrow {
    height: 17px;
    display: flex;
    align-items: center;
    justify-content: center;
  }
  .arrow::before {
    content: '';
    border: 4px solid transparent;
  }
  .up::before {
    border-top: 0;
    border-bottom-color: #a3a3a3;
  }
  .down::before {
    border-bottom: 0;
    border-top-color: #505050;
  }
  .track {
    flex: 1;
    display: flex;
    justify-content: center;
  }
  .thumb {
    width: 13px;
    height: 92%;
    background: #a8a8a8;
  }

  .taskbar {
    display: flex;
    gap: 1px;
    height: 40px;
    background: #1e1e1e;
  }
  .app {
    position: relative;
    width: 48px;
  }
  .current {
    background: #4a4a4a;
    box-shadow: inset 0 -2px #7580c0;
  }
  .open {
    background: linear-gradient(#7580c0, #7580c0) center bottom / 40px 2px no-repeat;
  }
  .badge {
    position: absolute;
    right: 11px;
    bottom: 7px;
    width: 14px;
    border-radius: 50%;
    background: #d3205a;
    font-size: 11px;
    font-weight: 700;
    line-height: 14px;
  }
  .badge.red {
    right: 10px;
    bottom: 6px;
    width: 16px;
    background: #f00;
    font-size: 12px;
    line-height: 16px;
  }
  .tray {
    display: flex;
    align-items: center;
    margin-left: auto;
    padding-right: 4px;
    border-right: 1px solid #666;
    margin-right: 4px;
    font-size: 12px;
    font-weight: 600;
  }
  .lang {
    margin: 0 14px 0 4px;
  }
  time {
    display: flex;
    align-items: center;
    font-family: Lato, sans-serif;
  }
  time i {
    width: 5px;
    height: 9px;
    border: 1px solid #ddd;
  }
  .notes {
    position: relative;
    margin: 0 12px 0 17px;
  }
  .count {
    position: absolute;
    left: 10px;
    top: 10px;
    width: 15px;
    border: 1px solid #999;
    border-radius: 50%;
    background: #333;
    font-size: 12px;
    font-weight: 700;
    line-height: 15px;
  }
</style>
